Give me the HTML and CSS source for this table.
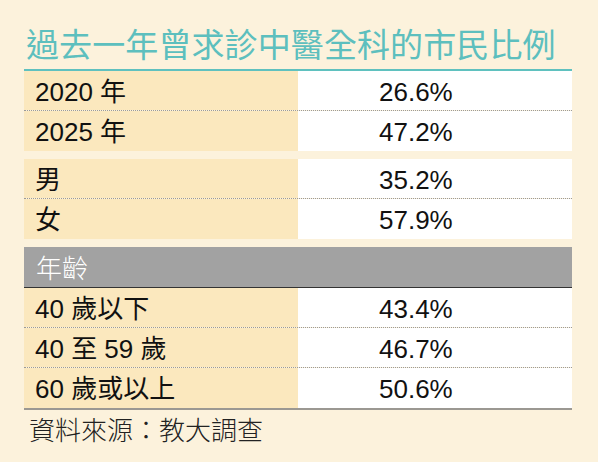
FILE: index.html
```html
<!DOCTYPE html>
<html lang="zh-Hant">
<head>
<meta charset="utf-8">
<link rel="stylesheet" href="styles.css">
</head>
<body>
<div class="card">
  <h1 class="title">過去一年曾求診中醫全科的市民比例</h1>
  <div class="table">
    <div class="group first">
      <div class="row"><div class="label">2020 年</div><div class="value">26.6%</div></div>
      <div class="row"><div class="label">2025 年</div><div class="value">47.2%</div></div>
    </div>
    <div class="group">
      <div class="row"><div class="label">男</div><div class="value">35.2%</div></div>
      <div class="row"><div class="label">女</div><div class="value">57.9%</div></div>
    </div>
    <div class="header">年齡</div>
    <div class="group last">
      <div class="row"><div class="label">40 歲以下</div><div class="value">43.4%</div></div>
      <div class="row"><div class="label">40 至 59 歲</div><div class="value">46.7%</div></div>
      <div class="row"><div class="label">60 歲或以上</div><div class="value">50.6%</div></div>
    </div>
  </div>
  <p class="source">資料來源：教大調查</p>
</div>
</body>
</html>
```
FILE: styles.css
```css
html, body {
  margin: 0;
  padding: 0;
  background: #fcf2dc;
}
.card {
  width: 598px;
  height: 462px;
  box-sizing: border-box;
  padding: 0 26px 0 24px;
  font-family: "Liberation Sans", "Noto Sans CJK TC", sans-serif;
  color: #111;
}
.title {
  margin: 0;
  padding: 23px 0 0 2px;
  height: 69px;
  box-sizing: border-box;
  font-family: "Noto Sans CJK TC", sans-serif;
  font-weight: 400;
  font-size: 33px;
  line-height: 40px;
  letter-spacing: 0.1px;
  color: #5dbfbe;
  white-space: nowrap;
}
.table {
  border-top: 2px solid #5fc1bf;
  display: flex;
  flex-direction: column;
}
.group {
  display: flex;
  flex-direction: column;
  margin-top: 8px;
}
.group.first {
  margin-top: 0;
}
.group.last {
  margin-top: 0;
  border-bottom: 2px solid #9b9892;
}
.row {
  display: grid;
  grid-template-columns: 274px 274px;
  grid-template-rows: 39px;
  height: 40px;
  box-sizing: border-box;
  border-bottom: 1px dotted #9a9a9a;
}
.row:last-child {
  border-bottom: none;
  grid-template-rows: 40px;
}
.label {
  background: #fbe8be;
  padding: 3px 0 0 11px;
  font-size: 26px;
  line-height: 36px;
}
.value {
  background: #ffffff;
  padding: 3px 0 0 81px;
  font-size: 26px;
  line-height: 36px;
}
.header {
  margin-top: 8px;
  height: 41px;
  box-sizing: border-box;
  background: #a2a2a2;
  border-bottom: 1px solid #333;
  color: #fff;
  padding: 2px 0 0 12px;
  font-family: "Noto Sans CJK TC", sans-serif;
  font-weight: 300;
  font-size: 26px;
  line-height: 36px;
}
.source {
  margin: 0;
  padding: 4px 0 0 5px;
  font-family: "Noto Sans CJK TC", sans-serif;
  font-weight: 300;
  font-size: 26px;
  line-height: 30px;
  color: #222;
}
```
